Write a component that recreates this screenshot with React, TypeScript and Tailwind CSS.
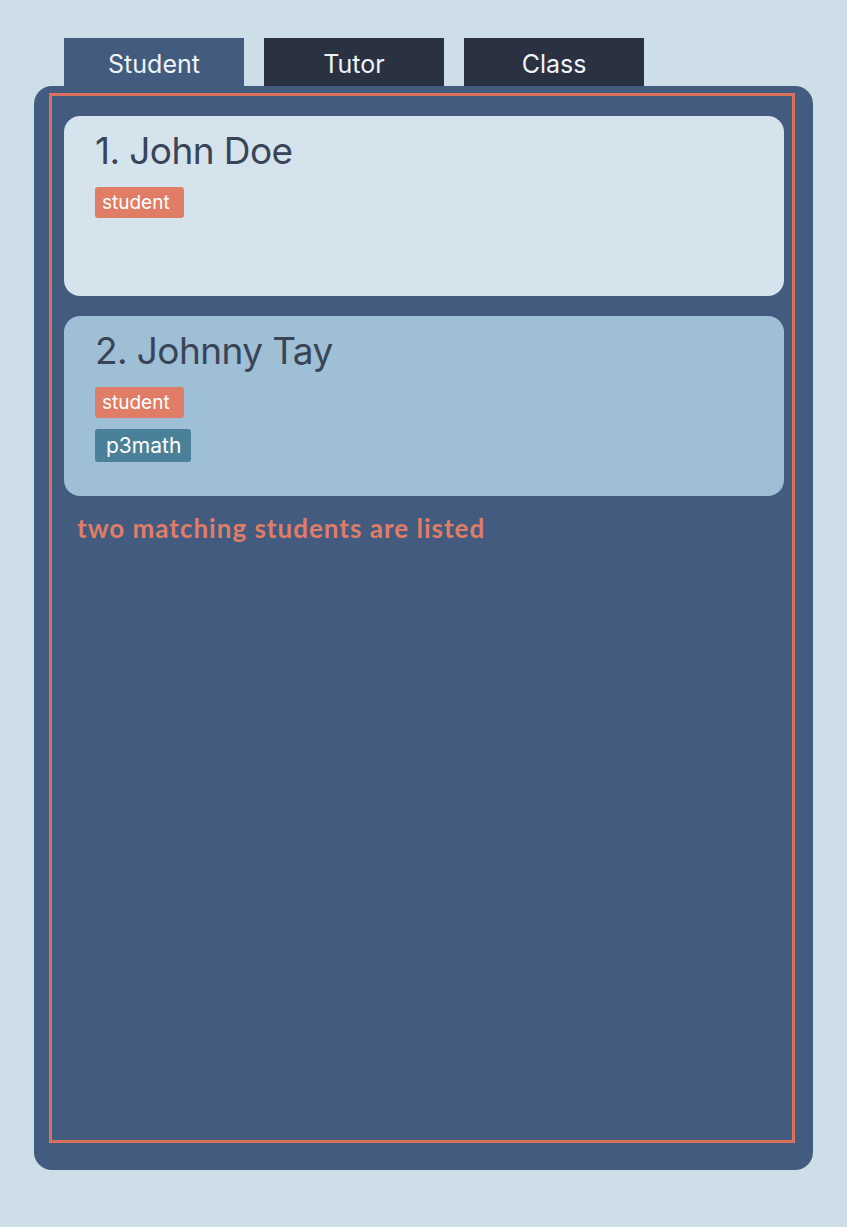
const TABS = ['Student', 'Tutor', 'Class']

type Tag = { label: string; cls: string }
type Student = { index: number; name: string; tags: Tag[]; bg: string }

const STUDENTS: Student[] = [
  {
    index: 1,
    name: 'John Doe',
    tags: [{ label: 'student', cls: 'bg-[#e07d67] h-[31px] leading-[31px] text-[19px] pl-[7px] pr-[14px]' }],
    bg: 'bg-[#d5e3ed]',
  },
  {
    index: 2,
    name: 'Johnny Tay',
    tags: [
      { label: 'student', cls: 'bg-[#e07d67] h-[31px] leading-[31px] text-[19px] pl-[7px] pr-[14px]' },
      { label: 'p3math', cls: 'bg-[#4a8199] h-[33px] leading-[33px] text-[21px] pl-[11px] pr-[10px]' },
    ],
    bg: 'bg-[#9ebfd5]',
  },
]

function StudentCard({ s }: { s: Student }) {
  return (
    <div className={`h-[180px] rounded-[16px] ${s.bg} pl-[31px] pt-[13px]`}>
      <p className="text-[37px] leading-[44px] text-[#394557] tracking-[-0.6px]">
        {s.index}. {s.name}
      </p>
      <div className="mt-[14px] flex flex-col items-start gap-[11px]">
        {s.tags.map((t) => (
          <span key={t.label} className={`${t.cls} rounded-[3px] text-white`}>
            {t.label}
          </span>
        ))}
      </div>
    </div>
  )
}

export default function App() {
  return (
    <div
      className="min-h-screen bg-[#cddee9] pt-[38px] pl-[34px]"
      style={{ fontFamily: 'Inter, "Noto Sans", sans-serif' }}
    >
      <div className="ml-[30px] flex gap-[20px]">
        {TABS.map((t, i) => (
          <div
            key={t}
            className={`flex h-[48px] w-[180px] items-center justify-center pt-[5px] text-[25px] text-[#eef3f7] ${
              i === 0 ? 'bg-[#425b7f]' : 'bg-[#2a3140]'
            }`}
          >
            {t}
          </div>
        ))}
      </div>
      <div className="h-[1084px] w-[779px] rounded-[18px] bg-[#425b7f] pt-[7px] pl-[15px] pr-[18px] pb-[27px]">
        <div className="h-full border-[3px] border-[#d8725a] pt-[20px] pl-[12px] pr-[8px]">
          <div className="flex flex-col gap-[20px]">
            {STUDENTS.map((s) => (
              <StudentCard key={s.index} s={s} />
            ))}
          </div>
          <p
            className="mt-[13px] ml-[13px] text-[26px] font-bold tracking-[1px] text-[#e07d67]"
            style={{ fontFamily: 'Lato, "Open Sans", sans-serif' }}
          >
            two matching students are listed
          </p>
        </div>
      </div>
    </div>
  )
}
